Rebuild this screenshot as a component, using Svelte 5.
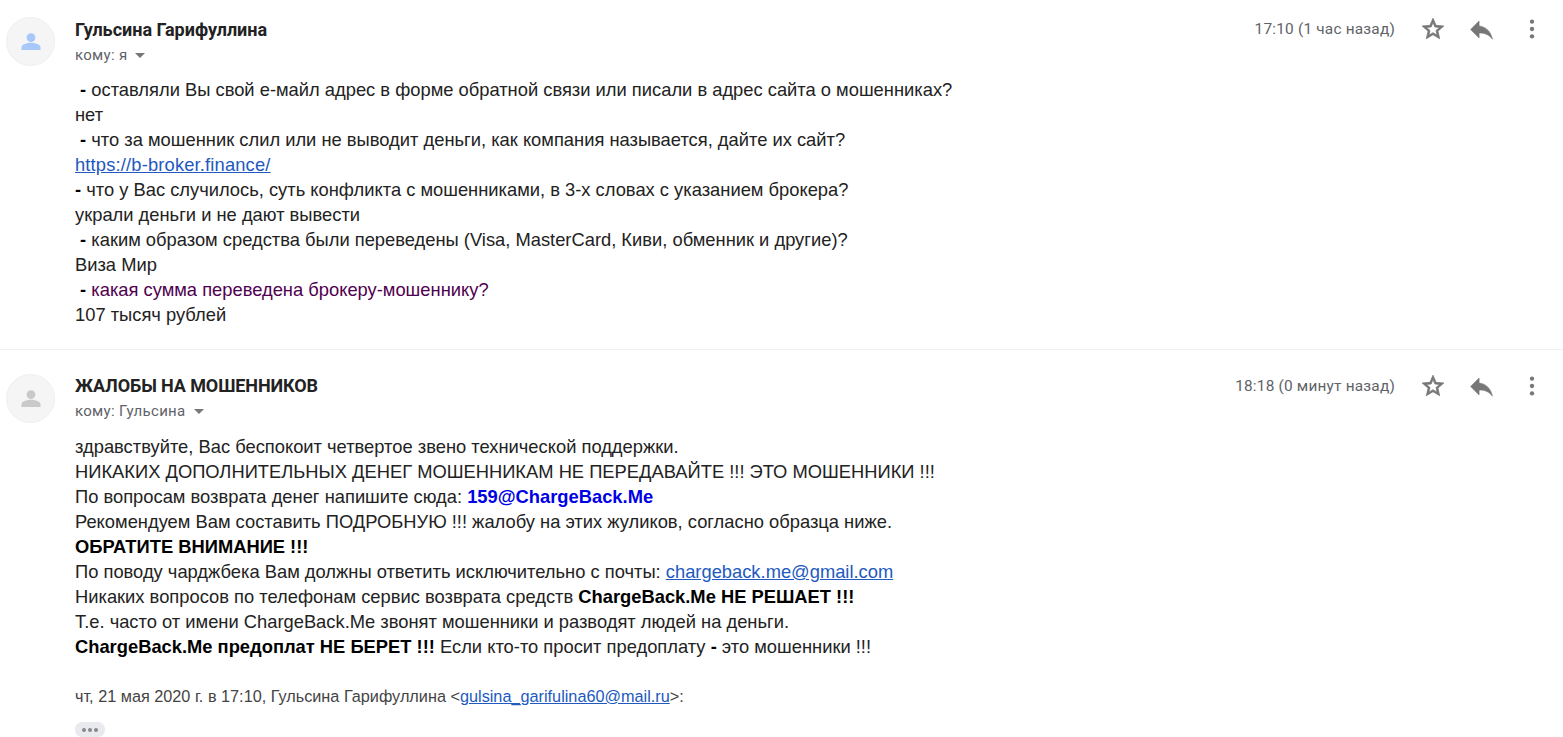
<script>
  const messages = [
    {
      id: 1,
      name: 'Гульсина Гарифуллина',
      to: 'кому: я',
      time: '17:10 (1 час назад)',
      tone: 'blue'
    },
    {
      id: 2,
      name: 'ЖАЛОБЫ НА МОШЕННИКОВ',
      to: 'кому: Гульсина',
      time: '18:18 (0 минут назад)',
      tone: 'grey'
    }
  ];
</script>

{#snippet head(m)}
  <header class="head">
    <div class="avatar {m.tone}">
      <svg viewBox="0 0 24 24" width="24" height="24">
        <circle cx="12" cy="7.6" r="4.4" />
        <path d="M2.5 20v-2.6c0-3 5.6-4.6 9.5-4.6s9.5 1.6 9.5 4.6V20z" />
      </svg>
    </div>
    <div class="who">
      <div class="name">{m.name}</div>
      <div class="to">{m.to}<span class="caret"></span></div>
    </div>
    <div class="meta">
      <span class="time">{m.time}</span>
      <svg class="ic star" viewBox="0 0 24 24" width="26" height="26">
        <path d="M22 9.24l-7.19-.62L12 2 9.19 8.63 2 9.24l5.46 4.73L5.82 21 12 17.27 18.18 21l-1.63-7.03L22 9.24zM12 15.4l-3.76 2.27 1-4.28-3.32-2.88 4.38-.38L12 6.1l1.71 4.04 4.38.38-3.32 2.88 1 4.28L12 15.4z" />
      </svg>
      <svg class="ic reply" viewBox="0 0 24 24" width="29" height="29">
        <path d="M10 9V5l-7 7 7 7v-4.1c5 0 8.5 1.6 11 5.1-1-5-4-10-11-11z" />
      </svg>
      <svg class="ic dots" viewBox="0 0 24 24" width="26" height="26">
        <circle cx="12" cy="5.2" r="2" /><circle cx="12" cy="12" r="2" /><circle cx="12" cy="18.8" r="2" />
      </svg>
    </div>
  </header>
{/snippet}

<main class="thread">
  <article class="msg first">
    {@render head(messages[0])}
    <div class="body">
      <div>&nbsp;<b>-</b> оставляли Вы свой е-майл адрес в форме обратной связи или писали в адрес сайта о мошенниках?</div>
      <div>нет</div>
      <div>&nbsp;<b>-</b> что за мошенник слил или не выводит деньги, как компания называется, дайте их сайт?</div>
      <div><a class="wide" href="#b">https://b-broker.finance/</a></div>
      <div><b>-</b> что у Вас случилось, суть конфликта с мошенниками, в 3-х словах с указанием брокера?</div>
      <div>украли деньги и не дают вывести</div>
      <div>&nbsp;<b>-</b> каким образом средства были переведены (Visa, MasterCard, Киви, обменник и другие)?</div>
      <div>Виза Мир</div>
      <div>&nbsp;<b>-</b> <span class="purple">какая сумма переведена брокеру-мошеннику?</span></div>
      <div>107 тысяч рублей</div>
    </div>
  </article>

  <article class="msg second">
    {@render head(messages[1])}
    <div class="body">
      <div>здравствуйте, Вас беспокоит четвертое звено технической поддержки.</div>
      <div>НИКАКИХ ДОПОЛНИТЕЛЬНЫХ ДЕНЕГ МОШЕННИКАМ НЕ ПЕРЕДАВАЙТЕ !!! ЭТО МОШЕННИКИ !!!</div>
      <div>По вопросам возврата денег напишите сюда: <b class="blue">159@ChargeBack.Me</b></div>
      <div>Рекомендуем Вам составить ПОДРОБНУЮ !!! жалобу на этих жуликов, согласно образца ниже.</div>
      <div><b>ОБРАТИТЕ ВНИМАНИЕ !!!</b></div>
      <div>По поводу чарджбека Вам должны ответить исключительно с почты: <a href="#c">chargeback.me@gmail.com</a></div>
      <div>Никаких вопросов по телефонам сервис возврата средств <b>ChargeBack.Me НЕ РЕШАЕТ !!!</b></div>
      <div>Т.е. часто от имени ChargeBack.Me звонят мошенники и разводят людей на деньги.</div>
      <div><b>ChargeBack.Me предоплат НЕ БЕРЕТ !!!</b> Если кто-то просит предоплату <b>-</b> это мошенники !!!</div>
    </div>
    <div class="quote">чт, 21 мая 2020 г. в 17:10, Гульсина Гарифуллина &lt;<a href="#m">gulsina_garifulina60@mail.ru</a>&gt;:</div>
    <div class="more"><i></i><i></i><i></i></div>
  </article>
</main>

<style>
  :global(body) {
    margin: 0;
    background: #fff;
  }
  .thread {
    height: 737px;
    overflow: hidden;
    box-sizing: border-box;
  }
  .msg {
    padding: 17px 0 0 6px;
  }
  .first {
    height: 332px;
    border-bottom: 1px solid #f0f0f0;
  }
  .second {
    padding-top: 24px;
  }
  .head {
    display: flex;
    align-items: flex-start;
    height: 49px;
  }
  .avatar {
    flex: none;
    width: 49px;
    height: 49px;
    border-radius: 50%;
    background: #f5f5f5;
    border: 1px solid #efefef;
    box-sizing: border-box;
    display: flex;
    align-items: center;
    justify-content: center;
  }
  .avatar.blue svg { fill: #a8c7fa; }
  .avatar.grey svg { fill: #c9c9c9; }
  .who {
    margin-left: 20px;
    flex: 1;
    font-family: Roboto, sans-serif;
  }
  .name {
    font-size: 18px;
    font-weight: 700;
    line-height: 26px;
    color: #222;
  }
  .second .name {
    margin-top: -1px;
    margin-bottom: 1px;
    letter-spacing: -0.1px;
  }
  .to {
    font-size: 15px;
    line-height: 22px;
    margin-top: 1px;
    color: #5f6368;
    letter-spacing: 0.3px;
    display: flex;
    align-items: center;
  }
  .caret {
    width: 0;
    height: 0;
    margin: 1px 0 0 8px;
    border-left: 5px solid transparent;
    border-right: 5px solid transparent;
    border-top: 5px solid #777;
  }
  .meta {
    display: flex;
    align-items: center;
    height: 24px;
    margin-right: 18px;
    font-family: Roboto, sans-serif;
    font-size: 15.4px;
    color: #5f6368;
  }
  .time {
    margin-right: 25px;
    letter-spacing: 0.2px;
  }
  .ic {
    fill: #777;
    flex: none;
  }
  .star {
    stroke: #777;
    stroke-width: 0.7;
  }
  .reply {
    margin-left: 21px;
    stroke: #777;
    stroke-width: 0.5;
  }
  .dots { margin-left: 23px; }
  .body {
    margin: 11px 0 0 69px;
    font-family: "Liberation Sans", Arial, sans-serif;
    font-size: 18.34px;
    line-height: 25px;
    color: #222;
  }
  .body b { color: #000; }
  a {
    color: #2159c0;
    text-decoration: underline;
  }
  a.wide { letter-spacing: 0.16px; }
  .purple { color: #500050; }
  .body b.blue { color: #0000e6; }
  .quote {
    margin: 25px 0 0 69px;
    font-family: "Liberation Sans", Arial, sans-serif;
    font-size: 16.25px;
    line-height: 25px;
    color: #444;
  }
  .more {
    margin: 13px 0 0 69px;
    width: 30px;
    height: 15px;
    border-radius: 7px;
    background: #e8eaed;
    display: flex;
    align-items: center;
    justify-content: center;
    gap: 2px;
  }
  .more i {
    width: 4px;
    height: 4px;
    border-radius: 50%;
    background: #888;
  }
</style>
